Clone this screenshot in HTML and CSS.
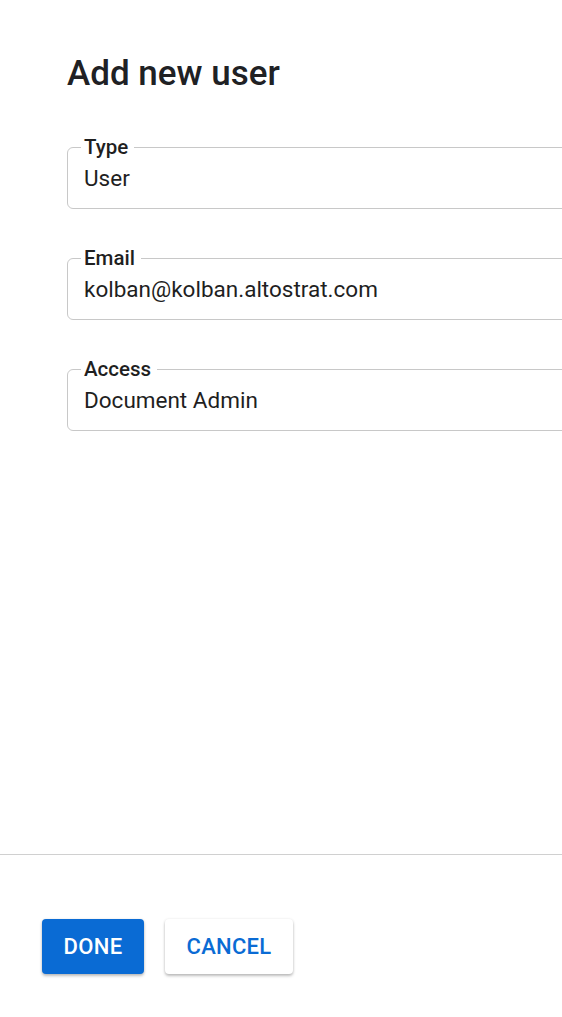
FILE: index.html
```html
<!DOCTYPE html>
<html>
<head>
<meta charset="utf-8">
<link rel="stylesheet" href="styles.css">
</head>
<body>
<div class="page">
  <main class="content">
    <h1 class="title">Add new user</h1>
    <fieldset class="field">
      <legend class="field-label">Type</legend>
      <div class="field-value">User</div>
    </fieldset>
    <fieldset class="field">
      <legend class="field-label">Email</legend>
      <div class="field-value">kolban@kolban.altostrat.com</div>
    </fieldset>
    <fieldset class="field">
      <legend class="field-label">Access</legend>
      <div class="field-value">Document Admin</div>
    </fieldset>
  </main>
  <footer class="footer">
    <button class="btn btn-primary">DONE</button>
    <button class="btn btn-secondary">CANCEL</button>
  </footer>
</div>
</body>
</html>
```
FILE: styles.css
```css
html, body {
  margin: 0;
  padding: 0;
  background: #ffffff;
}
body {
  font-family: Roboto, "Liberation Sans", sans-serif;
  color: #1f1f1f;
  overflow: hidden;
}
.page {
  width: 562px;
  height: 1017px;
  display: flex;
  flex-direction: column;
  overflow: hidden;
}
.content {
  flex: 1;
  padding: 54px 0 0 67px;
  display: flex;
  flex-direction: column;
  gap: 37px;
}
.title {
  margin: 0 0 4px 0;
  font-size: 35px;
  font-weight: 500;
  line-height: 40px;
  color: #202124;
}
.field {
  margin: 0;
  width: 620px;
  box-sizing: border-box;
  border: 1px solid #c8c8c8;
  border-radius: 6px;
  padding: 5px 0 16px 13px;
}
.field-label {
  padding: 0 6px 0 3px;
  font-size: 20.5px;
  font-weight: 500;
  line-height: 24px;
  color: #1f1f1f;
}
.field-value {
  padding-left: 3px;
  font-size: 22.5px;
  line-height: 28px;
  color: #1f1f1f;
}
.footer {
  height: 163px;
  flex-shrink: 0;
  border-top: 1px solid #d0d0d0;
  display: flex;
  align-items: flex-start;
  gap: 21px;
  padding: 64px 0 0 42px;
  box-sizing: border-box;
}
.btn {
  height: 55px;
  border: none;
  border-radius: 4px;
  font-family: Roboto, "Liberation Sans", sans-serif;
  font-size: 22px;
  font-weight: 500;
  letter-spacing: 0.3px;
  padding: 0;
  cursor: pointer;
  box-shadow: 0 2px 3px rgba(0,0,0,0.25), 0 0 3px rgba(0,0,0,0.08);
}
.btn-primary {
  background: #0a6bd4;
  color: #ffffff;
  width: 102px;
}
.btn-secondary {
  background: #ffffff;
  color: #0a6bd4;
  width: 128px;
}
```
